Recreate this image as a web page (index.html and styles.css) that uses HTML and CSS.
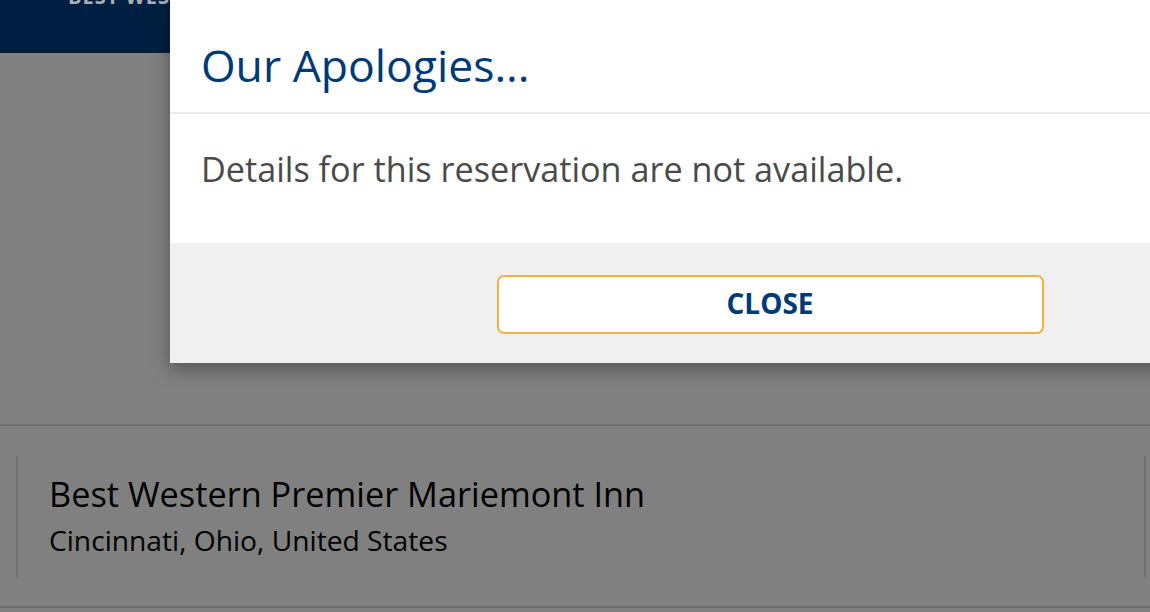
FILE: index.html
```html
<!DOCTYPE html>
<html lang="en">
<head>
<meta charset="utf-8">
<title>Our Apologies</title>
<link rel="stylesheet" href="styles.css">
</head>
<body>
<div class="page">
  <header class="nav">
    <span class="nav-brand">BEST WESTERN</span>
  </header>
  <div class="spacer"></div>
  <section class="hotel">
    <div class="hotel-card">
      <div class="hotel-name">Best Western Premier Mariemont Inn</div>
      <div class="hotel-loc">Cincinnati, Ohio, United States</div>
    </div>
  </section>
  <div class="bottom"></div>
</div>
<div class="modal" role="dialog">
  <div class="modal-header">
    <h1 class="modal-title">Our Apologies...</h1>
  </div>
  <div class="modal-body">
    <p class="modal-text">Details for this reservation are not available.</p>
  </div>
  <div class="modal-footer">
    <button class="btn-close" type="button">CLOSE</button>
  </div>
</div>
</body>
</html>
```
FILE: styles.css
```css
html, body {
  margin: 0;
  padding: 0;
}
body {
  width: 1150px;
  height: 612px;
  overflow: hidden;
  position: relative;
  background: #808080;
  font-family: "Open Sans", "Noto Sans", sans-serif;
}
.page {
  display: flex;
  flex-direction: column;
  height: 612px;
}
.nav {
  height: 53px;
  background: #001f40;
  overflow: hidden;
  padding-left: 68px;
}
.nav-brand {
  display: block;
  margin-top: -15px;
  font-size: 20px;
  line-height: 24px;
  font-weight: 700;
  color: #a9afb8;
  letter-spacing: 1px;
}
.spacer {
  height: 371px;
}
.hotel {
  border-top: 2px solid #6f6f6f;
  height: 182px;
  padding: 30px 4px 0 16px;
  box-sizing: border-box;
}
.hotel-card {
  height: 122px;
  border-left: 2px solid #707070;
  border-right: 2px solid #707070;
  padding: 18px 0 0 31px;
  box-sizing: border-box;
}
.hotel-name {
  font-size: 34.3px;
  line-height: 40px;
  color: #000;
}
.hotel-loc {
  font-size: 28.2px;
  line-height: 36px;
  color: #000;
  margin-top: 8px;
}
.bottom {
  height: 2px;
  background: #6c6c6c;
}
.modal {
  position: absolute;
  left: 170px;
  top: 0;
  width: 1200px;
  background: #fff;
  box-shadow: 0 6px 18px rgba(0, 0, 0, 0.35);
}
.modal-header {
  padding: 38px 31px 21px;
  border-bottom: 2px solid #ededed;
}
.modal-title {
  margin: 0;
  font-size: 44.5px;
  line-height: 53px;
  font-weight: 400;
  color: #003a78;
}
.modal-body {
  height: 129px;
  padding: 0 31px;
  box-sizing: border-box;
}
.modal-text {
  margin: 0;
  padding-top: 33px;
  font-size: 34.2px;
  line-height: 44px;
  color: #4a4a4a;
}
.modal-footer {
  height: 120px;
  background: #f0f0f0;
  display: flex;
  justify-content: center;
  align-items: flex-start;
  padding-top: 32px;
  box-sizing: border-box;
}
.btn-close {
  width: 547px;
  height: 59px;
  background: #fff;
  border: 2px solid #f0b13e;
  border-radius: 7px;
  font-family: "Open Sans", "Noto Sans", sans-serif;
  font-size: 28px;
  font-weight: 700;
  color: #003a78;
  padding: 0 0 3px;
}
```
